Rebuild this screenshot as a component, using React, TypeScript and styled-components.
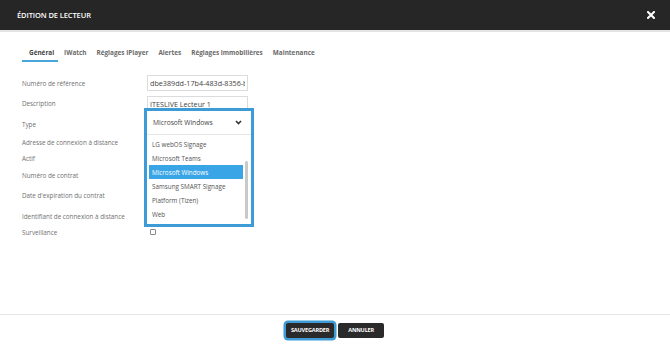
import styled, { createGlobalStyle } from "styled-components";

const GlobalStyle = createGlobalStyle`
  html, body {
    margin: 0;
    padding: 0;
    background: #ffffff;
  }
  body {
    font-family: "Open Sans", "Liberation Sans", sans-serif;
  }
`;

const Page = styled.div`
  display: flex;
  flex-direction: column;
  width: 670px;
  height: 344px;
  overflow: hidden;
  background: #ffffff;
`;

const Header = styled.header`
  display: flex;
  align-items: center;
  justify-content: space-between;
  height: 30px;
  padding: 0 14px 0 17px;
  background-color: #262626;
  border-bottom: 2px solid #e4e4e4;
`;

const Title = styled.h1`
  margin: 0;
  color: #ffffff;
  font-size: 7.5px;
  font-weight: 600;
  letter-spacing: -0.1px;
`;

const CloseButton = styled.button`
  display: flex;
  align-items: center;
  justify-content: center;
  width: 10px;
  height: 10px;
  padding: 0;
  border: none;
  background: none;
`;

const Body = styled.main`
  flex: 1;
  display: flex;
  flex-direction: column;
`;

const TabList = styled.nav`
  display: flex;
  gap: 10px;
  margin-top: 14px;
  padding-left: 29px;
`;

const Tab = styled.span<{ $active?: boolean }>`
  position: relative;
  height: 16px;
  padding-top: 1px;
  box-sizing: border-box;
  line-height: 12px;
  font-size: 6.4px;
  font-weight: 700;
  color: ${props => (props.$active ? "#444444" : "#6a6a6a")};
  white-space: nowrap;

  &::after {
    content: "";
    display: ${props => (props.$active ? "block" : "none")};
    position: absolute;
    left: -7px;
    right: -4px;
    bottom: 0;
    height: 2px;
    background: #49a7da;
  }
`;

const Form = styled.div`
  display: flex;
  flex-direction: column;
  margin-top: 11px;
  padding-left: 22px;
`;

const Row = styled.div<{ $h: number }>`
  display: grid;
  grid-template-columns: 125px 102px;
  align-items: center;
  height: ${props => props.$h}px;
`;

const Label = styled.span`
  font-size: 6.3px;
  color: #707070;
  white-space: nowrap;
`;

const Field = styled.div`
  position: relative;
  display: flex;
  align-items: center;
  height: 100%;
`;

const TextInput = styled.input`
  width: 101px;
  height: 16px;
  box-sizing: border-box;
  padding: 0 2px;
  border: 1px solid #dcdcdc;
  font-family: "Open Sans", "Liberation Sans", sans-serif;
  font-size: 7.2px;
  color: #444444;
  background: #ffffff;
  outline: none;
`;

const Popup = styled.div`
  position: absolute;
  top: -6px;
  left: -3px;
  z-index: 2;
  width: 110px;
  box-sizing: border-box;
  border: 3px solid #3d9bd6;
  background: #ffffff;
`;

const SelectBox = styled.div`
  display: flex;
  align-items: center;
  justify-content: space-between;
  height: 23px;
  padding: 0 9px 0 6px;
  border-bottom: 1px solid #e6e6e6;
  font-size: 6.7px;
  color: #444444;
`;

const OptionArea = styled.div`
  display: flex;
  gap: 2px;
  padding: 2px 3px 3px 2px;
`;

const OptionList = styled.ul`
  flex: 1;
  margin: 0;
  padding: 0;
  list-style: none;
`;

const Option = styled.li<{ $selected?: boolean }>`
  display: flex;
  align-items: center;
  height: 14px;
  padding-left: 3px;
  font-size: 6.3px;
  color: ${props => (props.$selected ? "#ffffff" : "#555555")};
  background: ${props => (props.$selected ? "#3aa5e6" : "transparent")};
  white-space: nowrap;
`;

const ScrollTrack = styled.div`
  display: flex;
  flex-direction: column;
  width: 3px;
  padding-top: 24px;
  padding-bottom: 2px;
`;

const ScrollThumb = styled.div`
  flex: 1;
  border-radius: 2px;
  background: #c9c9c9;
`;

const CheckBox = styled.span`
  display: block;
  width: 6px;
  height: 6px;
  margin-left: 3px;
  border: 1px solid #8a8a8a;
  border-radius: 1px;
  box-sizing: border-box;
`;

const Footer = styled.footer`
  display: flex;
  align-items: center;
  justify-content: center;
  gap: 4px;
  height: 30px;
  padding-top: 1px;
  box-sizing: border-box;
  border-top: 1px solid #e6e6e6;
`;

const Button = styled.button<{ $focused?: boolean }>`
  height: 15px;
  padding: 0 ${props => (props.$focused ? "5px" : "10px")};
  border: none;
  border-radius: 2px;
  background: #2a2a2a;
  color: #ffffff;
  font-family: "Open Sans", "Liberation Sans", sans-serif;
  font-size: 5.6px;
  font-weight: 700;
  letter-spacing: -0.2px;
  box-shadow: ${props => (props.$focused ? "0 0 0 2.5px #3d9bd6" : "none")};
`;

const tabs = [
  "Général",
  "IWatch",
  "Réglages IPlayer",
  "Alertes",
  "Réglages immobilières",
  "Maintenance",
];

const options = [
  "LG webOS Signage",
  "Microsoft Teams",
  "Microsoft Windows",
  "Samsung SMART Signage",
  "Platform (Tizen)",
  "Web",
];

function CloseIcon() {
  return (
    <svg width="8" height="8" viewBox="0 0 8 8">
      <path d="M1 1 L7 7 M7 1 L1 7" stroke="#ffffff" strokeWidth="2" strokeLinecap="square" />
    </svg>
  );
}

function Chevron() {
  return (
    <svg width="7" height="5" viewBox="0 0 7 5">
      <path d="M1 1 L3.5 3.5 L6 1" stroke="#333333" strokeWidth="1.6" fill="none" />
    </svg>
  );
}

function TypeSelect() {
  return (
    <Popup>
      <SelectBox>
        <span>Microsoft Windows</span>
        <Chevron />
      </SelectBox>
      <OptionArea>
        <OptionList>
          {options.map(o => (
            <Option key={o} $selected={o === "Microsoft Windows"}>
              {o}
            </Option>
          ))}
        </OptionList>
        <ScrollTrack>
          <ScrollThumb />
        </ScrollTrack>
      </OptionArea>
    </Popup>
  );
}

export default function App() {
  return (
    <Page>
      <GlobalStyle />
      <Header>
        <Title>ÉDITION DE LECTEUR</Title>
        <CloseButton>
          <CloseIcon />
        </CloseButton>
      </Header>
      <Body>
        <TabList>
          {tabs.map((t, i) => (
            <Tab key={t} $active={i === 0}>
              {t}
            </Tab>
          ))}
        </TabList>
        <Form>
          <Row $h={20}>
            <Label>Numéro de référence</Label>
            <Field>
              <TextInput readOnly value="dbe389dd-17b4-483d-8356-b2f1c0e94a7d" />
            </Field>
          </Row>
          <Row $h={21}>
            <Label>Description</Label>
            <Field>
              <TextInput readOnly value="ITESLIVE Lecteur 1" />
            </Field>
          </Row>
          <Row $h={20}>
            <Label>Type</Label>
            <Field>
              <TypeSelect />
            </Field>
          </Row>
          <Row $h={17}>
            <Label>Adresse de connexion à distance</Label>
            <Field />
          </Row>
          <Row $h={15}>
            <Label>Actif</Label>
            <Field />
          </Row>
          <Row $h={18}>
            <Label>Numéro de contrat</Label>
            <Field />
          </Row>
          <Row $h={22}>
            <Label>Date d'expiration du contrat</Label>
            <Field />
          </Row>
          <Row $h={20}>
            <Label>Identifiant de connexion à distance</Label>
            <Field />
          </Row>
          <Row $h={12}>
            <Label>Surveillance</Label>
            <Field>
              <CheckBox />
            </Field>
          </Row>
        </Form>
      </Body>
      <Footer>
        <Button $focused>SAUVEGARDER</Button>
        <Button>ANNULER</Button>
      </Footer>
    </Page>
  );
}
